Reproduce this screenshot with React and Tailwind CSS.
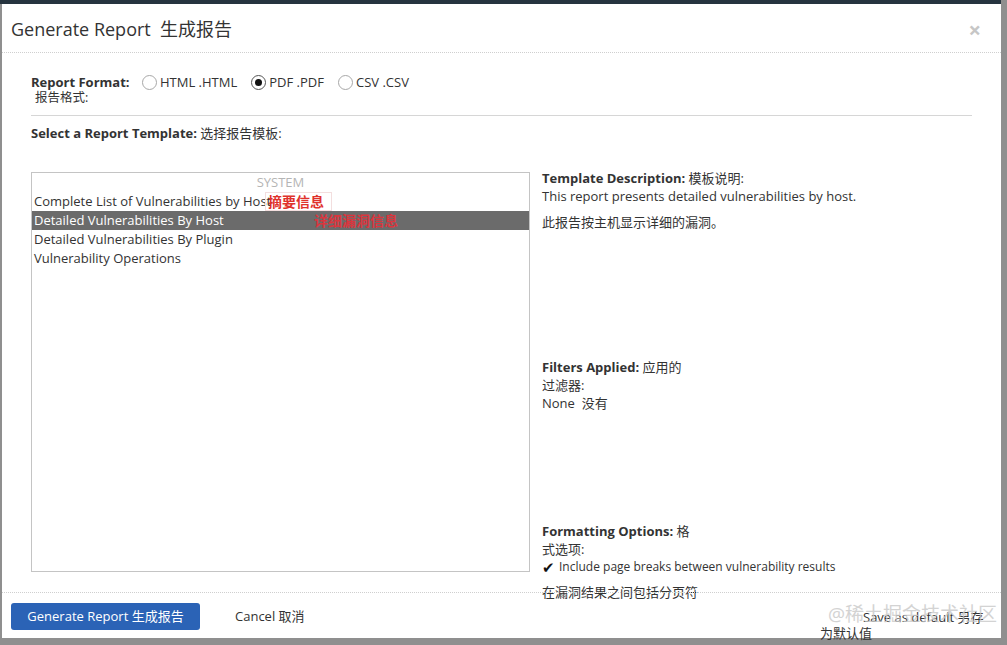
import React, { useState } from 'react';

const font = { fontFamily: '"Open Sans", "Noto Sans CJK SC", sans-serif' };

const templates = [
  'Complete List of Vulnerabilities by Host',
  'Detailed Vulnerabilities By Host',
  'Detailed Vulnerabilities By Plugin',
  'Vulnerability Operations',
];

function Radio({ checked, label, onClick }) {
  return (
    <label onClick={onClick} className="flex items-center cursor-pointer mr-[14px]">
      <span
        className={`w-[15px] h-[15px] rounded-full border bg-white flex items-center justify-center mr-[3px] ${
          checked ? 'border-[#555]' : 'border-[#a8a8a8]'
        }`}
      >
        {checked && <span className="w-[7px] h-[7px] rounded-full bg-[#111]" />}
      </span>
      <span>{label}</span>
    </label>
  );
}

export default function App() {
  const [format, setFormat] = useState('pdf');
  const [selected, setSelected] = useState(1);
  const [pageBreaks, setPageBreaks] = useState(true);

  return (
    <div className="w-[1007px] h-[645px] bg-[#8f8f8f] flex overflow-hidden text-[13px] text-[#333]" style={font}>
      <div className="w-[1001px] flex flex-col">
        <div className="h-[4px] bg-[#26343f]" />
        <div className="pl-[2px]">
          <div className="relative w-[999px] h-[634px] bg-white flex flex-col">
            {/* Kopf */}
            <div className="h-[49px] shrink-0 border-b border-dotted border-[#cfcfcf] flex items-center justify-between pl-[9px] pr-[20px]">
              <h1 className="text-[18px] text-[#333] font-normal leading-none mt-[2px]">Generate Report&nbsp; 生成报告</h1>
              <span className="text-[22px] font-bold text-[#c6c6c6] leading-none mt-[1px]">×</span>
            </div>

            {/* Inhalt */}
            <div className="h-[539px] shrink-0 px-[29px] pt-[22px]">
              <div className="flex items-start">
                <div className="w-[111px] text-[13px]">
                  <div className="font-bold leading-[15px]">Report Format:</div>
                  <div className="pl-[4px] leading-[15px] text-[12.5px]">报告格式:</div>
                </div>
                <div className="flex items-center leading-[15px]">
                  <Radio checked={format === 'html'} label="HTML .HTML" onClick={() => setFormat('html')} />
                  <Radio checked={format === 'pdf'} label="PDF .PDF" onClick={() => setFormat('pdf')} />
                  <Radio checked={format === 'csv'} label="CSV .CSV" onClick={() => setFormat('csv')} />
                </div>
              </div>

              <div className="mt-[10px] border-t border-[#d6d6d6]" />

              <div className="mt-[8px] leading-[18px]">
                <span className="font-bold">Select a Report Template:</span> 选择报告模板:
              </div>

              <div className="mt-[30px] flex items-start">
                {/* Liste */}
                <div className="relative w-[499px] h-[400px] shrink-0 border border-[#c4c4c4] leading-[19px]">
                  <div className="text-center text-[#b5b5b5] uppercase">System</div>
                  {templates.map((t, i) => (
                    <div
                      key={t}
                      onClick={() => setSelected(i)}
                      className={`pl-[2px] cursor-pointer ${selected === i ? 'bg-[#6b6b6b] text-white' : ''}`}
                    >
                      {t}
                    </div>
                  ))}
                  {/* Anmerkungen */}
                  <span className="absolute left-[233px] top-[19px] h-[19px] w-[67px] border border-[#f3dede] pointer-events-none" />
                  <span className="absolute left-[236px] top-[19px] text-[14px] leading-[19px] font-bold text-[#e0312b] pointer-events-none">
                    摘要信息
                  </span>
                  <span className="absolute left-[282px] top-[38px] text-[14px] leading-[19px] font-bold text-[#d9363e] pointer-events-none">
                    详细漏洞信息
                  </span>
                </div>

                {/* Rechte Spalte */}
                <div className="ml-[12px] -mt-[3px] flex-1 leading-[18px]">
                  <div>
                    <span className="font-bold">Template Description:</span> 模板说明:
                  </div>
                  <div>This report presents detailed vulnerabilities by host.</div>
                  <div className="mt-[8px]">此报告按主机显示详细的漏洞。</div>

                  <div className="mt-[127px]">
                    <span className="font-bold">Filters Applied:</span> 应用的
                    <br />
                    过滤器:
                  </div>
                  <div>None&nbsp; 没有</div>

                  <div className="mt-[111px] leading-[17.5px]">
                    <span className="font-bold">Formatting Options:</span> 格
                    <br />
                    式选项:
                  </div>
                  <label className="flex items-center cursor-pointer" onClick={() => setPageBreaks(!pageBreaks)}>
                    <span className="w-[14px] text-[15px] leading-none text-[#111]">{pageBreaks ? '✔' : ''}</span>
                    <span className="ml-[3px] text-[12px]">Include page breaks between vulnerability results</span>
                  </label>
                  <div className="mt-[7px]">在漏洞结果之间包括分页符</div>
                </div>
              </div>
            </div>

            {/* Fuss */}
            <div className="flex-1 border-t border-dotted border-[#cfcfcf] flex items-start pl-[9px] pr-[15px]">
              <button className="mt-[10px] h-[27px] w-[189px] rounded-[3px] bg-[#2b63b6] text-white text-[13px]">
                Generate Report 生成报告
              </button>
              <button className="mt-[10px] h-[27px] ml-[35px] text-[13px] text-[#333]">Cancel 取消</button>
              <div className="ml-auto mt-[16px] w-[166px] leading-[16px] indent-[43px]">
                Save as default 另存
                <br />
                为默认值
              </div>
            </div>

            {/* Wasserzeichen */}
            <span className="absolute left-[826px] top-[601px] text-[19px] leading-none text-[#c9c9c9] opacity-80 pointer-events-none">
              @稀土掘金技术社区
            </span>
          </div>
        </div>
      </div>
    </div>
  );
}
